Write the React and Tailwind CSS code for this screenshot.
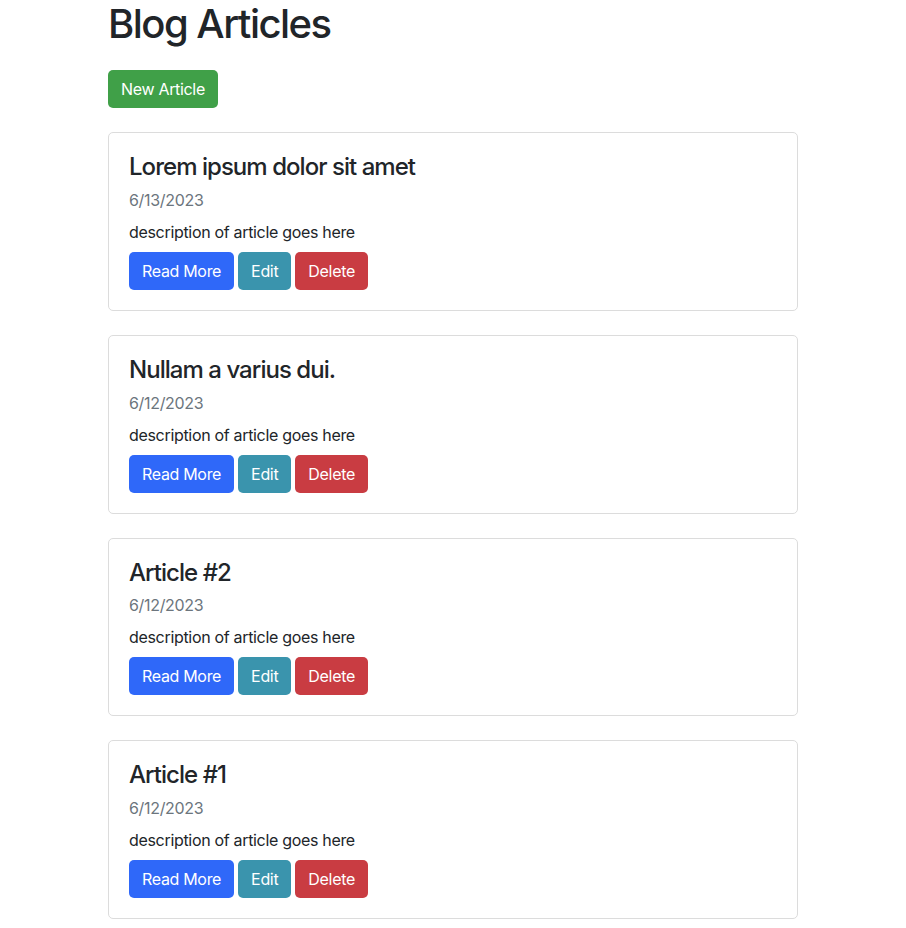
import React from "react";

const articles = [
  { title: "Lorem ipsum dolor sit amet", date: "6/13/2023" },
  { title: "Nullam a varius dui.", date: "6/12/2023" },
  { title: "Article #2", date: "6/12/2023" },
  { title: "Article #1", date: "6/12/2023" },
];

const btn = "px-3 py-1.5 text-base leading-6 text-white border border-transparent rounded-[5px] tracking-[-0.02em]";

const ArticleCard = ({ article }) => (
  <div className="border border-[#dcdcdc] rounded-[5px] p-5 mb-6">
    <h4 className="text-2xl leading-[1.2] font-medium tracking-[-0.04em] text-[#212529] mb-1.5">{article.title}</h4>
    <div className="text-[#6c757d] mb-2">{article.date}</div>
    <div className="mb-2">description of article goes here</div>
    <div className="flex gap-1">
      <button className={`${btn} bg-[#2f68f9]`}>Read More</button>
      <button className={`${btn} bg-[#3a94ad]`}>Edit</button>
      <button className={`${btn} bg-[#c93c42]`}>Delete</button>
    </div>
  </div>
);

export default function App() {
  return (
    <div className="bg-white min-h-screen text-[#212529] tracking-[-0.02em] font-['Inter','Liberation_Sans',sans-serif]">
      <div className="w-[690px] mx-auto">
        <h1 className="text-[40px] leading-[1.2] font-medium tracking-[-0.038em] mb-[22px]">Blog Articles</h1>
        <button className={`${btn} bg-[#40a048] mb-6`}>New Article</button>
        {articles.map((a) => (
          <ArticleCard key={a.title} article={a} />
        ))}
      </div>
    </div>
  );
}
